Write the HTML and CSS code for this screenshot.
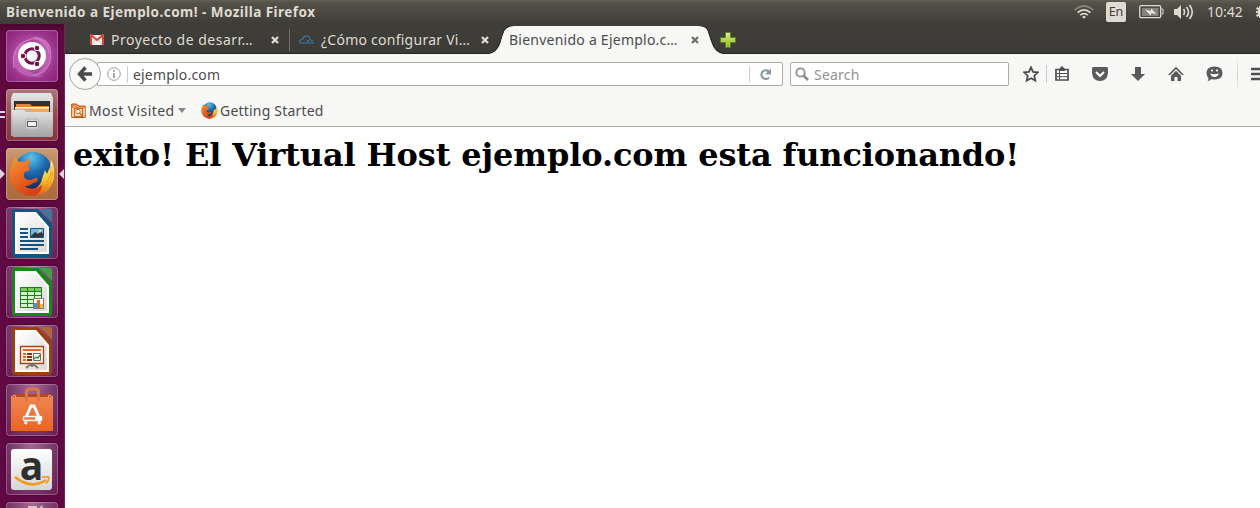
FILE: index.html
```html
<!DOCTYPE html>
<html lang="es">
<head>
<meta charset="utf-8">
<title>Bienvenido a Ejemplo.com!</title>
<link rel="stylesheet" href="styles.css">
</head>
<body>
<svg width="0" height="0" class="defs">
  <defs>
    <linearGradient id="steel" x1="0" y1="0" x2="0" y2="1"><stop offset="0" stop-color="#e4e4e4"/><stop offset="1" stop-color="#a2a2a2"/></linearGradient>
    <linearGradient id="paper" x1="0" y1="0" x2="1" y2="1"><stop offset="0" stop-color="#fff"/><stop offset="1" stop-color="#d9d9d9"/></linearGradient>
    <linearGradient id="bag" x1="0" y1="0" x2="0" y2="1"><stop offset="0" stop-color="#ee8550"/><stop offset="1" stop-color="#ee6323"/></linearGradient>
    <radialGradient id="globe" cx=".45" cy=".15" r=".8"><stop offset="0" stop-color="#5cc3ee"/><stop offset=".5" stop-color="#1c69ae"/><stop offset="1" stop-color="#142d66"/></radialGradient>
    <linearGradient id="fox" x1="0" y1="0" x2=".5" y2="1"><stop offset="0" stop-color="#f39a35"/><stop offset=".5" stop-color="#ec6a22"/><stop offset="1" stop-color="#d3431a"/></linearGradient>
    <linearGradient id="tail" x1="0" y1="0" x2="0" y2="1"><stop offset="0" stop-color="#fff6a0"/><stop offset=".55" stop-color="#fbc42a"/><stop offset="1" stop-color="#e2591b"/></linearGradient>
    <linearGradient id="lime" x1="0" y1="0" x2="0" y2="1"><stop offset="0" stop-color="#d3e979"/><stop offset="1" stop-color="#94ba22"/></linearGradient>
    <symbol id="firefox" viewBox="0 0 46 46">
      <circle cx="24" cy="20" r="19" fill="url(#globe)"/>
      <path d="M42 9q4 7 3 17-3 19-23 19l-8-4q17-2 19-13l3-9 2 4 3-7z" fill="url(#tail)"/>
      <path d="M42 15q1 10-5 17M44 20q0 9-8 17" fill="none" stroke="#f08b22" stroke-width=".9"/>
      <path d="M4 11q0-3 2-5l4 5q3-1 6 0 2-3 5-4 0 5-2 8l2 3q-1 2-5 3-3 4 1 7 3 2 7 0 4-2 5 0 0 3-5 4-4 4-9 3 8 6 18-1 0 7-7 11Q6 46 1 27 0 17 4 11z" fill="url(#fox)"/>
    </symbol>
    <symbol id="close" viewBox="0 0 8 8"><path d="M1 1l6 6M7 1l-6 6" stroke="currentColor" stroke-width="2.3"/></symbol>
    <symbol id="document" viewBox="0 0 40 50">
      <path d="M0 3q0-2 2-2h24l14 15v31q0 2-2 2H2q-2 0-2-2z" fill="currentColor"/>
      <path d="M3 4h21l13 15v27H3z" fill="#fff"/>
      <path d="M5 6h18l12 14v24H5z" fill="url(#paper)"/>
      <path d="M28 1h10q2 0 2 2v11z" fill="currentColor"/><path d="M28 1h10q2 0 2 2v11z" fill="#fff" opacity=".2"/>
    </symbol>
  </defs>
</svg>

<header class="panel">
  <span class="panel-title">Bienvenido a Ejemplo.com! - Mozilla Firefox</span>
  <div class="indicators">
    <svg class="ind-wifi" width="20" height="14" viewBox="0 0 20 14" fill="none" stroke-width="1.7"><path d="M.7 5Q10-3 19.300 5" stroke="#858279"/><path d="M3.500 7.700Q10 2 16.500 7.700M6.200 10.200Q10 7 13.800 10.200" stroke="#dfdbd2"/><path d="M8 11.700q2-1.500 4 0l-2 2z" fill="#dfdbd2"/></svg>
    <span class="ind-lang">En</span>
    <svg class="ind-battery" width="25" height="14" viewBox="0 0 25 14"><rect x=".7" y=".7" width="21" height="12" rx="1.500" fill="none" stroke="#dfdbd2" stroke-width="1.300"/><path d="M22.500 4h1.500v5h-1.500" fill="none" stroke="#dfdbd2"/><path d="M3 3h16.500v8H3z" fill="#85827b"/><path d="M6 4.500l5.500 1.500 1-2.500 5 6-5-1.500-1 2.500z" fill="#e8e4dc"/></svg>
    <svg class="ind-sound" width="20" height="16" viewBox="0 0 20 16"><path d="M0 5h3l4-4v14l-4-4H0z" fill="#dfdbd2"/><path d="M9.500 5q2 3 0 6M12.500 3q4 5 0 10M15.500 1q5.500 7 0 14" fill="none" stroke="#dfdbd2" stroke-width="1.600"/></svg>
    <span class="ind-clock">10:42</span>
    <svg class="ind-gear" width="4" height="14" viewBox="0 0 4 14"><path d="M4 1H3v2L1 2 0 4l2 1v1H0v2h2v1l-2 1 1 2 2-1v2h1z" fill="#dfdbd2"/></svg>
  </div>
</header>

<div class="desktop">
  <nav class="launcher">
    <div class="tile tile-dash">
      <svg width="52" height="52" viewBox="0 0 52 52"><g fill="none" stroke="#e8a6dc" stroke-width="1.100" opacity=".6"><path d="M8 38Q4 15 25 9q15-2 18 14"/><path d="M28 7q20 2 16 25-5 13-17 13"/></g><path d="M25 7q22-1 20 20-1 13-16 18 12-8 11-20Q38 12 25 7zM9 38Q4 18 19 11q-9 12-4 22 7 12 23 13-20 4-29-8z" fill="#d07ac8" opacity=".5"/><circle cx="26" cy="26" r="14" fill="#fff"/><circle cx="26" cy="26" r="7.200" fill="none" stroke="#771349" stroke-width="3"/><g fill="#771349" stroke="#fff" stroke-width="1"><circle cx="17" cy="26" r="2.800"/><circle cx="31" cy="18" r="2.800"/><circle cx="31" cy="34" r="2.800"/></g></svg>
    </div>
    <div class="tile tile-files">
      <svg width="52" height="52" viewBox="0 0 52 52"><path d="M7 4h38l2 5v38H5V9z" fill="url(#steel)"/><path d="M8 12h36v12H8z" fill="#34302e"/><path d="M10 15h14l2 2h17v6H10z" fill="#ee8136"/><path d="M9 18h34v5H9z" fill="#f6a55d"/><path d="M9 18h34v1.500H9z" fill="#fff0dd"/><path d="M6 21h12l2 2h26l1 2-1 23H7z" fill="url(#steel)"/><rect x="19.500" y="30" width="13" height="10" rx="2" fill="#d6d6d6" stroke="#b0b0b0"/><rect x="21.500" y="32.500" width="9" height="5" fill="#f2f2f2" stroke="#555"/></svg>
      <i class="windows"></i>
    </div>
    <div class="tile tile-firefox">
      <svg width="46" height="46"><use href="#firefox"/></svg>
      <i class="arrow arrow-left"></i><i class="arrow arrow-right"></i>
    </div>
    <div class="tile tile-writer">
      <svg width="40" height="50" viewBox="0 0 40 50"><use href="#document"/><g fill="#17517d"><path d="M8 20h8v2H8zM8 24h8v2H8zM8 28h8v2H8zM8 32h24v2H8zM8 36h24v2H8zM8 40h18v2H8z"/></g><path d="M18.500 20.500h13v9h-13z" fill="#74b7e2" stroke="#17517d"/><path d="M19 29v-1l4-4 3 2 3-3 2 3v3z" fill="#353535"/><circle cx="28" cy="23" r="1.500" fill="#f7d778"/></svg>
    </div>
    <div class="tile tile-calc">
      <svg width="40" height="50" viewBox="0 0 40 50"><use href="#document"/><path d="M8 20h22v21H8z" fill="#d4f6c8"/><path d="M8 20h22v4H8z" fill="#79c95b"/><path d="M8.500 20.500h21v20h-21zM8 24.500h22M8 28.500h22M8 32.500h22M8 36.500h22M15.500 20v21M22.500 20v21" fill="none" stroke="#17821c"/><path d="M21.500 31.500h10v10h-10z" fill="#fff" stroke="#777"/><path d="M22 36h3v5h-3z" fill="#28a0e7"/><path d="M25 33h3v8h-3z" fill="#e76123"/><path d="M28 37h3v4h-3z" fill="#f2bb30"/></svg>
    </div>
    <div class="tile tile-impress">
      <svg width="40" height="50" viewBox="0 0 40 50"><use href="#document"/><path d="M8.500 20.500h23v17h-23z" fill="#fff3e9" stroke="#a54612" stroke-width="1.300"/><path d="M11 23h18v2H11zM11 27h3v2h-3zM11 30h3v2h-3zM11 33h3v2h-3z" fill="#dd6a2b"/><path d="M15 27h5v2h-5zM15 30h5v2h-5zM15 33h5v2h-5z" fill="#803311"/><path d="M21.500 27.500h7v7h-7z" fill="#fff" stroke="#666"/><path d="M22 33l2-2 2 1 2-3" fill="none" stroke="#349440" stroke-width="1.400"/><path d="M20 38v3M19 38l-5 4M21 38l5 4" stroke="#777" stroke-width="2"/></svg>
    </div>
    <div class="tile tile-software">
      <svg width="52" height="52" viewBox="0 0 52 52"><path d="M7 10h38l2 4H5z" fill="#b74922"/><path d="M5 13h42v34H5z" fill="url(#bag)"/><path d="M20.500 17V8q0-3 3-3h6q3 0 3 3v9" fill="none" stroke="#dc744c" stroke-width="3"/><path d="M5 13l4-2 1 3M47 13l-4-2-1 3" fill="none" stroke="#f39a6e"/><path d="M20.500 32L25 22h3l4.500 10M20.500 37.500l-1.500 2.500M32.500 37.500L34 40" fill="none" stroke="#fff" stroke-width="3"/><rect x="17.500" y="32.500" width="18" height="4" rx="1" fill="#ee7742" stroke="#fff" stroke-width="1.500"/><path d="M29 34.500h6" stroke="#fff" stroke-width="3"/></svg>
    </div>
    <div class="tile tile-amazon">
      <div class="amazon"><span>a</span><svg width="38" height="11" viewBox="0 0 38 11"><path d="M2 1q16 13 31 3" fill="none" stroke="#f7981d" stroke-width="2.600"/><path d="M29 1.500q6-1.500 7 0 0 3-3 6" fill="none" stroke="#f7981d" stroke-width="1.700"/></svg></div>
    </div>
    <div class="tile tile-settings">
      <svg width="52" height="52" viewBox="0 0 52 52"><path d="M22 4h9l-1 10h-7zM36 3l-5 6 4 4 3-4z" fill="#d1ccd0"/></svg>
    </div>
  </nav>

  <main class="browser">
    <div class="tabs">
      <div class="tab tab-mail">
        <svg class="favicon" width="14" height="12" viewBox="0 0 14 12"><path d="M0 1h14v10H0z" fill="#eee"/><path d="M2 10l5-5 5 5" fill="none" stroke="#c6c6c6"/><path d="M1 11V1l6 5 6-5v10" fill="none" stroke="#df4638" stroke-width="2.100"/></svg>
        <span class="tab-label label-mail">Proyecto de desarr…</span>
        <svg class="tab-close" width="8" height="8"><use href="#close"/></svg>
      </div>
      <div class="tab tab-cloud">
        <svg class="favicon" width="16" height="10" viewBox="0 0 16 10" fill="none" stroke="#347eae" stroke-width="1.200"><path d="M14 8H2Q0 7 1 5.500 2 4 4 4 5 0 8 1q2 0 3 2M10 5l2-1M12 6l2-1M14 8l1-1"/><circle cx="9" cy="6" r=".5"/></svg>
        <span class="tab-label label-cloud">¿Cómo configurar Vi…</span>
        <svg class="tab-close" width="8" height="8"><use href="#close"/></svg>
      </div>
      <div class="tab tab-active">
        <svg class="tab-shape" width="236" height="28" viewBox="0 0 236 28"><path d="M0 28q9-1 12-11 2-8 4-12 3-5 10-5h184q8 0 10 5l4 12q3 10 12 11z" fill="#f7f7f5"/><path d="M0 27.500q9-1 12-11 2-8 4-12 3-5 10-5h184q8 0 10 5l4 12q3 10 12 11" fill="none" stroke="#242322" stroke-width="1"/></svg>
        <span class="tab-label label-active">Bienvenido a Ejemplo.c…</span>
        <svg class="tab-close" width="8" height="8"><use href="#close"/></svg>
      </div>
      <svg class="new-tab" width="16" height="16" viewBox="0 0 16 16"><path d="M5.500.5h5v5h5v5h-5v5h-5v-5h-5v-5h5z" fill="url(#lime)" stroke="#5b8124"/><path d="M6.500 5.500v-4h3" fill="none" stroke="#e4f2a3"/></svg>
    </div>

    <div class="toolbar">
      <div class="back"><svg width="16" height="16" viewBox="0 0 16 16"><path d="M8.500 1.500L2.500 8l6 6.500M3 8h12" fill="none" stroke="#4b4b4b" stroke-width="3.400"/></svg></div>
      <div class="urlbar">
        <svg class="info" width="14" height="14" viewBox="0 0 14 14"><circle cx="7" cy="7" r="6.300" fill="none" stroke="#9b9b9b"/><path d="M7 3v1.700M7 6v5" stroke="#888" stroke-width="1.500"/></svg>
        <span class="url">ejemplo.com</span>
        <span class="reload"><svg width="13" height="13" viewBox="0 0 13 13"><path d="M9.500 3.300A4.300 4.300 0 1 0 10 9.500" fill="none" stroke="#8795a4" stroke-width="2.200"/><path d="M12 .5v6H6z" fill="#8795a4"/></svg></span>
      </div>
      <div class="search">
        <svg width="15" height="15" viewBox="0 0 15 15"><circle cx="5.500" cy="5.500" r="4.200" fill="none" stroke="#8c8c8c" stroke-width="1.800"/><path d="M8.500 8.500l4.500 4.500" stroke="#8c8c8c" stroke-width="2.600"/></svg>
        <span>Search</span>
      </div>
      <div class="actions">
        <svg class="star" width="16" height="16" viewBox="0 0 16 16"><path d="M8 1.300l2 4.500 5 .5-3.700 3.400 1 4.900L8 12.200l-4.300 2.400 1-4.900L1 6.300l5-.5z" fill="none" stroke="#4d4d4d" stroke-width="1.800"/></svg>
        <i class="split"></i>
        <svg width="16" height="16" viewBox="0 0 16 16"><path d="M2 3.500h12V14H2z" fill="#fff" stroke="#4d4d4d" stroke-width="1.700"/><path d="M5 3l3-3 3 3v2H5z" fill="#4d4d4d"/><path d="M3 7.500h10M3 10.700h10M5.500 5v8" stroke="#4d4d4d" stroke-width="1"/></svg>
        <svg width="16" height="16" viewBox="0 0 16 16"><path d="M1 1h14l1 1v5q-1 8-8 8T0 7V2z" fill="#5a5a5a"/><path d="M4 6l4 4 4-4" fill="none" stroke="#fff" stroke-width="2.100"/></svg>
        <svg width="16" height="16" viewBox="0 0 16 16"><path d="M5 1h6v7h4l-7 7-7-7h4z" fill="#5a5a5a"/></svg>
        <svg width="16" height="16" viewBox="0 0 16 16"><path d="M1 9l7-7 7 7" fill="none" stroke="#555" stroke-width="1.600"/><path d="M3 9.800l5-5 5 5V15H9.500v-4h-3v4H3z" fill="#5a5a5a"/></svg>
        <svg class="chat" width="17" height="16" viewBox="0 0 17 16"><path d="M8.500.5q8 0 8 6.500t-8 6.500q-2 0-3-.5-2 2-4 2 1-1 1-3-2-2-2-5 0-6.500 8-6.500z" fill="#5a5a5a"/><circle cx="6" cy="4.500" r="1.100" fill="#fff"/><circle cx="11" cy="4.500" r="1.100" fill="#fff"/><path d="M4 7.500q4.500 1.500 9 0-1.500 3.500-4.500 3.500T4 7.500z" fill="#fff"/></svg>
        <i class="split tall"></i>
        <svg class="menu" width="9" height="14" viewBox="0 0 9 14"><path d="M1 2h8M1 7h8M1 12h8" stroke="#4f4f4f" stroke-width="2.600" stroke-linecap="round"/></svg>
      </div>
    </div>

    <div class="bookmarks">
      <svg width="15" height="16" viewBox="0 0 15 16"><path d="M.7 1h5l1.500 2h7v11.500H.7z" fill="#eb9750" stroke="#b85b1d"/><path d="M1 5h13v9H1z" fill="#f4c99c"/><rect x="3.500" y="5.500" width="8" height="8" fill="#f9dfc2" stroke="#c56a27"/><circle cx="7" cy="8.500" r="2.200" fill="#fff" stroke="#c56a27"/><path d="M8.500 10l4 4" stroke="#c56a27" stroke-width="1.500"/></svg>
      <span class="mark-visited">Most Visited</span>
      <i class="caret"></i>
      <svg class="mark-fox" width="17" height="17"><use href="#firefox"/></svg>
      <span class="mark-start">Getting Started</span>
    </div>

    <article class="page"><h1>exito! El Virtual Host ejemplo.com esta funcionando!</h1></article>
  </main>
</div>
</body>
</html>
```

FILE: styles.css
```css
* { box-sizing: border-box; }
body { margin: 0; width: 1260px; height: 508px; overflow: hidden; background: #fff; font-family: "Noto Sans", "Open Sans", sans-serif; font-size: 14px; color: #4c4c4c; white-space: nowrap; }
svg { display: block; flex: none; }
.defs { position: absolute; }

.panel { display: flex; height: 24px; align-items: center; justify-content: space-between; padding-left: 6px; background: linear-gradient(#615e52, #545148 3px, #3d3c37); color: #dfdbd2; }
.panel-title { font-size: 13.5px; font-weight: 700; letter-spacing: .46px; line-height: 24px; }
.indicators { display: flex; align-items: center; height: 24px; }
.ind-wifi { margin-right: 12px; }
.ind-lang { width: 20px; height: 20px; margin-right: 13px; border-radius: 2px; background: #dfdbd2; color: #3f3d38; font-size: 12.5px; line-height: 20px; text-align: center; }
.ind-battery { margin-right: 10px; }
.ind-sound { margin-right: 13px; }
.ind-clock { width: 37px; margin-right: 12px; padding-bottom: 1px; font-size: 14px; }

.desktop { display: flex; height: 484px; }
.launcher { display: flex; flex: none; flex-direction: column; align-items: center; gap: 7px; width: 65px; padding: 6px 1px 0 0; overflow: hidden; border-right: 1px solid #792055; background: linear-gradient(#49052f, #5f0940 8px, #600843); }
.tile { position: relative; display: flex; flex: none; align-items: center; justify-content: center; width: 52px; height: 52px; border-radius: 4px; background: radial-gradient(ellipse at 50% 0, #a56a91, #78386a 60%, #6a1952); box-shadow: inset 0 0 0 1px #ffffff40, 0 0 2px #3b0328; }
.tile-dash { background: radial-gradient(#cf73c3, #98308a 70%, #8b2479); }
.tile-files { background: linear-gradient(#ae7579, #94434c 55%, #893440); }
.tile-firefox { background: linear-gradient(#c99c79, #b47648 55%, #ad6b3e); }
.tile-writer svg { color: #155481; }
.tile-calc svg { color: #18861a; }
.tile-impress svg { color: #9a4110; }
.arrow { position: absolute; top: 21px; border: 5px solid transparent; }
.arrow-left { left: -6px; border-left-color: #e2d4dd; border-right: 0; }
.arrow-right { right: -6px; border-right-color: #e2d4dd; border-left: 0; }
.windows { position: absolute; left: -6px; top: 22px; width: 5px; height: 7px; border: solid #e2d4dd; border-width: 2px 0; }
.amazon { display: flex; flex-direction: column; align-items: center; width: 41px; height: 41px; border-radius: 3px; background: linear-gradient(#fff, #d5d5d5); }
.amazon span { height: 27px; padding-top: 3px; color: #2e2e2e; font: 700 39px/26px "Open Sans", sans-serif; }

.browser { display: flex; flex: 1; flex-direction: column; min-width: 0; background: #fff; }
.tabs { display: flex; height: 30px; align-items: center; border-bottom: 1px solid #242322; background: linear-gradient(#3f3e39, #3c3b37); color: #dfdbd2; }
.tab { position: relative; display: flex; height: 30px; align-items: center; padding-top: 2px; }
.tab-mail { width: 225px; padding-left: 25px; }
.tab-mail::after { position: absolute; right: 0; top: 5px; width: 1px; height: 22px; background: #716f69; content: ""; }
.tab-cloud { width: 210px; padding-left: 9px; }
.tab-active { width: 220px; padding-left: 9px; color: #4c4c4c; }
.tab-label { position: relative; width: 160px; }
.label-mail { margin-left: 7px; letter-spacing: .5px; }
.label-cloud { margin-left: 6px; letter-spacing: .25px; }
.label-active { width: 182px; letter-spacing: .24px; }
.tab-close { position: relative; color: #dfdbd2; }
.tab-active .tab-close { color: #6f6f6f; }
.tab-shape { position: absolute; left: -12px; top: 2px; }
.new-tab { position: relative; margin-top: 2px; }

.toolbar { display: flex; flex: none; height: 40px; align-items: center; padding-left: 4px; background: #f7f7f5; }
.back { position: relative; z-index: 1; display: flex; width: 32px; height: 32px; align-items: center; justify-content: center; border: 1px solid #a5a5a1; border-radius: 50%; background: #fafaf9; }
.urlbar { display: flex; width: 686px; height: 24px; align-items: center; margin-left: -4px; padding-left: 9px; border: 1px solid #acaca6; border-radius: 0 2px 2px 0; background: #fff; }
.url { margin-left: 6px; padding-left: 5px; border-left: 1px solid #ccc; letter-spacing: .18px; line-height: 17px; }
.reload { display: flex; height: 16px; align-items: center; margin-left: auto; padding: 0 10px 0 9px; border-left: 1px solid #ccc; }
.search { display: flex; width: 219px; height: 24px; align-items: center; margin-left: 7px; padding-left: 4px; border: 1px solid #acaca6; border-radius: 2px; background: #fff; color: #929292; }
.search span { margin-left: 4px; letter-spacing: .2px; }
.actions { display: flex; align-items: center; gap: 22px; margin-left: 14px; }
.star { margin-right: -15px; }
.split { width: 1px; height: 18px; margin-right: -15px; background: #ccc; }
.tall { height: 36px; margin-left: -8px; margin-right: -9px; background: linear-gradient(transparent, #ccc, transparent); }

.bookmarks { display: flex; flex: none; height: 33px; align-items: center; padding: 1px 0 0 6px; border-bottom: 1px solid #adada2; background: #f7f7f5; }
.mark-visited { width: 86px; margin-left: 3px; letter-spacing: .42px; }
.caret { margin-left: 3px; border: 4px solid transparent; border-top: 5px solid #888; border-bottom: 0; }
.mark-fox { margin-left: 15px; }
.mark-start { margin-left: 2px; letter-spacing: .2px; }
.page { flex: 1; padding: 8px; }
.page h1 { margin: 0; color: #000; font: 700 32px/40px "DejaVu Serif", serif; letter-spacing: -.135px; }
```
